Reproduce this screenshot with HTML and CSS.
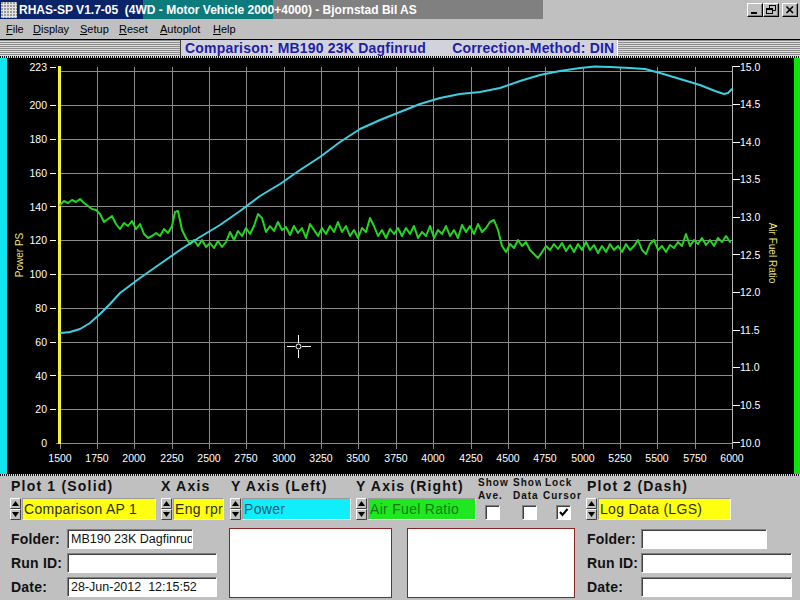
FILE: index.html
```html
<!DOCTYPE html>
<html>
<head>
<meta charset="utf-8">
<title>RHAS-SP</title>
<link rel="stylesheet" href="styles.css">
</head>
<body>
<svg class="defs" width="0" height="0">
  <defs>
    <symbol id="spin" viewBox="0 0 11 22">
      <rect x="0" y="0" width="11" height="22" fill="#c0c0c0"/>
      <path d="M0.5 10.5V0.5H10.5" stroke="#fff" fill="none"/>
      <path d="M0.5 10.5H10.5V0.5" stroke="#404040" fill="none"/>
      <path d="M2 8L5.5 3L9 8Z" fill="#000"/>
      <path d="M0.5 21.5V11.5H10.5" stroke="#fff" fill="none"/>
      <path d="M0.5 21.5H10.5V11.5" stroke="#404040" fill="none"/>
      <path d="M2 14L9 14L5.5 19Z" fill="#000"/>
    </symbol>
  </defs>
</svg>

<div class="titlebar">
  <svg class="app-icon" width="16" height="16" viewBox="0 0 16 16">
    <rect width="16" height="16" fill="#9a9a9a"/>
    <path d="M0 2.5H16M0 5.5H16M0 8.5H16M0 11.5H16M0 14.5H16M2.5 0V16M5.5 0V16M8.5 0V16M11.5 0V16M14.5 0V16" stroke="#e4e4e4"/>
  </svg>
  <span class="title">RHAS-SP V1.7-05  (4WD - Motor Vehicle 2000+4000) - Bjornstad Bil AS</span>
  <div class="win-buttons">
    <div class="wbtn"><svg width="14" height="12" viewBox="0 0 14 12"><rect x="3" y="8" width="6" height="2" fill="#000"/></svg></div>
    <div class="wbtn"><svg width="14" height="12" viewBox="0 0 14 12"><path d="M5.5 4V1.5H11.5V6.5H9" fill="none" stroke="#000"/><path d="M5 1.5H12" stroke="#000"/><rect x="2.5" y="4.5" width="6" height="5" fill="none" stroke="#000"/><path d="M2 5.5H9" stroke="#000"/></svg></div>
    <div class="wbtn close"><svg width="14" height="12" viewBox="0 0 14 12"><path d="M3.5 2.5L10 9M10 2.5L3.5 9" stroke="#000" stroke-width="1.6"/></svg></div>
  </div>
</div>

<div class="menubar">
  <span class="mi"><u>F</u>ile</span>
  <span class="mi"><u>D</u>isplay</span>
  <span class="mi"><u>S</u>etup</span>
  <span class="mi"><u>R</u>eset</span>
  <span class="mi"><u>A</u>utoplot</span>
  <span class="mi"><u>H</u>elp</span>
</div>

<div class="header">
  <div class="stripes left"></div>
  <div class="caption"><span>Comparison: MB190 23K Dagfinrud</span><span class="cm">Correction-Method: DIN</span></div>
  <div class="stripes right"></div>
</div>
<div class="dots"></div>

<div class="chart">
  <svg width="800" height="416" viewBox="0 58 800 416" shape-rendering="crispEdges">
    <rect x="0" y="58" width="800" height="416" fill="#000"/>
    <rect x="0" y="58" width="7" height="416" fill="#10e4ee"/>
    <rect x="794" y="58" width="6" height="416" fill="#10e010"/>

    <g stroke="#8c8c8c" stroke-width="1">
      <path d="M60 71.5H732M60 105.5H732M60 139.5H732M60 173.5H732M60 206.5H732M60 240.5H732M60 274.5H732M60 308.5H732M60 342.5H732M60 375.5H732M60 409.5H732M56 443.5H732"/>
      <path d="M97.5 67V449M134.5 67V449M172.5 67V449M209.5 67V449M246.5 67V449M284.5 67V449M321.5 67V449M358.5 67V449M396.5 67V449M433.5 67V449M471.5 67V449M508.5 67V449M545.5 67V449M583.5 67V449M620.5 67V449M657.5 67V449M695.5 67V449"/>
      <path d="M60.5 443V449"/>
    </g>
    <path d="M732.5 66V449" stroke="#b8b8b8"/>

    <g stroke="#fff">
      <path d="M50 67.5H56M50 105.5H56M50 139.5H56M50 173.5H56M50 206.5H56M50 240.5H56M50 274.5H56M50 308.5H56M50 342.5H56M50 375.5H56M50 409.5H56"/>
      <path d="M733 66.5H740M733 104.5H740M733 142.5H740M733 179.5H740M733 217.5H740M733 254.5H740M733 292.5H740M733 330.5H740M733 367.5H740M733 405.5H740M733 442.5H740"/>
    </g>

    <rect x="58" y="66" width="3" height="378" fill="#f2f230"/>

    <g fill="#fff" font-size="10.5" text-anchor="end">
      <text x="47" y="70.5">223</text>
      <text x="47" y="109.3">200</text>
      <text x="47" y="143.1">180</text>
      <text x="47" y="176.9">160</text>
      <text x="47" y="210.7">140</text>
      <text x="47" y="244.4">120</text>
      <text x="47" y="278.2">100</text>
      <text x="47" y="312">80</text>
      <text x="47" y="345.8">60</text>
      <text x="47" y="379.5">40</text>
      <text x="47" y="413.3">20</text>
      <text x="47" y="447.1">0</text>
    </g>
    <g fill="#fff" font-size="10.5" text-anchor="start">
      <text x="740" y="70.5">15.0</text>
      <text x="740" y="108.1">14.5</text>
      <text x="740" y="145.7">14.0</text>
      <text x="740" y="183.3">13.5</text>
      <text x="740" y="220.9">13.0</text>
      <text x="740" y="258.5">12.5</text>
      <text x="740" y="296.1">12.0</text>
      <text x="740" y="333.7">11.5</text>
      <text x="740" y="371.3">11.0</text>
      <text x="740" y="408.9">10.5</text>
      <text x="740" y="446.5">10.0</text>
    </g>
    <g fill="#fff" font-size="10.5" text-anchor="middle">
      <text x="60" y="462">1500</text>
      <text x="97" y="462">1750</text>
      <text x="134" y="462">2000</text>
      <text x="172" y="462">2250</text>
      <text x="209" y="462">2500</text>
      <text x="246" y="462">2750</text>
      <text x="284" y="462">3000</text>
      <text x="321" y="462">3250</text>
      <text x="358" y="462">3500</text>
      <text x="396" y="462">3750</text>
      <text x="433" y="462">4000</text>
      <text x="471" y="462">4250</text>
      <text x="508" y="462">4500</text>
      <text x="545" y="462">4750</text>
      <text x="583" y="462">5000</text>
      <text x="620" y="462">5250</text>
      <text x="657" y="462">5500</text>
      <text x="695" y="462">5750</text>
      <text x="732" y="462">6000</text>
    </g>

    <text class="axis-title" x="19" y="258.5" transform="rotate(-90 19 255)" text-anchor="middle">Power PS</text>
    <text class="axis-title" x="772" y="256.5" transform="rotate(90 772 253)" text-anchor="middle">Air Fuel Ratio</text>

    <g shape-rendering="auto" fill="none" stroke-linejoin="round" stroke-linecap="round">
      <polyline stroke="#22d622" stroke-width="2" points="60,205 64,201 68,203 72,200 76,202 80,199 84,203 88,206 92,209 96,210 100,214 104,222 108,219 112,216 116,224 120,229 124,223 128,226 132,221 136,229 140,224 144,234 148,238 152,236 156,233 160,236 164,229 168,233 172,226 175,212 178,211 182,230 186,238 190,244 194,240 198,246 202,240 206,247 210,243 214,248 218,241 222,247 226,242 230,232 234,240 238,231 242,236 246,228 250,234 254,226 258,214 262,218 266,232 270,226 274,231 278,222 282,230 286,227 290,235 294,226 298,233 302,228 306,238 310,224 314,230 318,236 322,228 326,234 330,226 334,232 338,222 342,232 346,226 350,236 354,230 358,238 362,228 366,232 370,218 374,226 378,236 382,230 386,238 390,229 394,234 398,228 402,236 406,228 410,234 414,226 418,238 422,232 426,236 430,226 434,238 438,230 442,234 446,226 450,236 454,230 458,238 462,225 466,232 470,226 474,234 478,224 482,232 486,228 490,222 494,220 498,230 502,246 506,252 510,244 514,248 518,240 522,246 526,242 530,250 534,254 538,258 542,252 546,246 550,250 554,244 558,249 562,243 566,251 570,245 574,252 578,244 582,250 586,242 590,250 594,245 598,253 602,246 606,252 610,244 614,250 618,246 622,252 626,244 630,250 634,246 638,240 642,250 646,254 650,244 654,240 658,250 662,246 666,252 670,245 674,248 678,242 682,246 686,234 690,246 694,240 698,244 702,238 706,245 710,240 714,246 718,238 722,242 726,236 730,242"/>
      <polyline stroke="#3ccfe0" stroke-width="2" points="61,333 70,332 80,329 90,323 100,314 110,304 120,293 140,278 160,264 180,250 200,237 220,225 240,211 260,196 280,184 300,170 320,157 340,142 360,129 380,120 400,112 420,104 440,98 460,94 480,92 500,88 520,81 540,75 560,71 580,68 595,66.5 610,67 630,68 645,69 660,73 680,79 700,85 715,91 724,94 728,93 732,89"/>
    </g>

    <g stroke="#fff" fill="none">
      <path d="M287 346.5H295M302 346.5H311M298.5 335V343M298.5 350V358"/>
      <circle cx="298.5" cy="346.5" r="2.5" shape-rendering="auto"/>
    </g>
  </svg>
</div>
<div class="dots"></div>

<div class="panel">
  <div class="controls">
    <div class="col c1">
      <div class="lbl">Plot 1 (Solid)</div>
      <div class="ctl"><svg class="spin"><use href="#spin"/></svg><div class="field yellow">Comparison AP 1</div></div>
    </div>
    <div class="col c2">
      <div class="lbl">X Axis</div>
      <div class="ctl"><svg class="spin"><use href="#spin"/></svg><div class="field yellow">Eng rpr</div></div>
    </div>
    <div class="col c3">
      <div class="lbl">Y Axis (Left)</div>
      <div class="ctl"><svg class="spin"><use href="#spin"/></svg><div class="field cyan">Power</div></div>
    </div>
    <div class="col c4">
      <div class="lbl">Y Axis (Right)</div>
      <div class="ctl"><svg class="spin"><use href="#spin"/></svg><div class="field green">Air Fuel Ratio</div></div>
    </div>
    <div class="col chk c5">
      <div class="cl">Show</div><div class="cl">Ave.</div>
      <div class="box"></div>
    </div>
    <div class="col chk c6">
      <div class="cl">Show</div><div class="cl">Data</div>
      <div class="box"></div>
    </div>
    <div class="col chk c7">
      <div class="cl l1">Lock</div><div class="cl">Cursor</div>
      <div class="box"><svg width="13" height="13" viewBox="0 0 13 13"><path d="M3 6L5.5 9L10.5 3" stroke="#000" stroke-width="2" fill="none"/></svg></div>
    </div>
    <div class="col c8">
      <div class="lbl">Plot 2 (Dash)</div>
      <div class="ctl"><svg class="spin"><use href="#spin"/></svg><div class="field yellow">Log Data (LGS)</div></div>
    </div>
  </div>

  <div class="lower">
    <div class="info left">
      <div class="row"><span class="rl">Folder:</span><div class="inp short">MB190 23K Dagfinrud</div></div>
      <div class="row"><span class="rl">Run ID:</span><div class="inp"></div></div>
      <div class="row"><span class="rl">Date:</span><div class="inp">28-Jun-2012  12:15:52</div></div>
    </div>
    <div class="memo m1"></div>
    <div class="memo m2"></div>
    <div class="info right">
      <div class="row"><span class="rl">Folder:</span><div class="inp short"></div></div>
      <div class="row"><span class="rl">Run ID:</span><div class="inp"></div></div>
      <div class="row"><span class="rl">Date:</span><div class="inp"></div></div>
    </div>
  </div>
</div>
</body>
</html>
```

FILE: styles.css
```css
* { box-sizing: border-box; }

html, body {
  margin: 0;
  padding: 0;
}

body {
  width: 800px;
  height: 600px;
  overflow: hidden;
  background: #c0c0c0;
  font-family: "Liberation Sans", Arial, sans-serif;
  color: #000;
}

.defs { position: absolute; width: 0; height: 0; }

/* Title bar */
.titlebar {
  height: 19px;
  display: flex;
  align-items: center;
  background: linear-gradient(90deg, #0a246a 0 143px, #0b7b7b 143px 273px, #808080 273px 543px, #c0c0c0 543px);
  color: #fff;
  font-weight: bold;
  font-size: 12px;
}

.app-icon { margin: 0 2px 0 1px; flex: none; }

.title { white-space: pre; flex: 1; }

.win-buttons { display: flex; margin-right: 2px; }

.wbtn {
  width: 16px;
  height: 14px;
  background: #c0c0c0;
  border-top: 1px solid #fff;
  border-left: 1px solid #fff;
  border-right: 1px solid #000;
  border-bottom: 1px solid #000;
  box-shadow: inset -1px -1px #808080;
  display: flex;
}

.wbtn.close { margin-left: 3px; }

/* Menu */
.menubar {
  height: 20px;
  display: flex;
  align-items: center;
  padding-left: 6px;
  font-size: 11px;
}

.mi:nth-child(1) { width: 27px; }
.mi:nth-child(2) { width: 47px; }
.mi:nth-child(3) { width: 39px; }
.mi:nth-child(4) { width: 41px; }
.mi:nth-child(5) { width: 53px; }

/* Header caption */
.header {
  height: 17px;
  display: flex;
  border-top: 1px solid #000;
}

.stripes {
  background: repeating-linear-gradient(180deg, #8e8e8e 0 1px, #dadada 1px 2px);
}
.stripes.left { width: 180px; }
.stripes.right { flex: 1; }

.caption {
  width: 438px;
  background: #d2d2dc;
  border-left: 1px solid #404040;
  border-right: 1px solid #fff;
  padding-left: 4px;
  font-size: 14px;
  font-weight: bold;
  letter-spacing: 0.2px;
  line-height: 16px;
  color: #1e1ea6;
  white-space: pre;
}

.caption .cm { margin-left: 26px; }

.dots {
  height: 2px;
  background: repeating-linear-gradient(90deg, #111 0 1px, #d8d8d8 1px 2px);
}

.chart { height: 416px; }
.chart svg { display: block; font-family: "Liberation Sans", Arial, sans-serif; }

.axis-title { fill: #ece27a; font-size: 10px; }

/* Bottom panel */
.panel { height: 124px; }

.controls {
  display: flex;
  height: 45px;
  padding-left: 8px;
}

.col { flex: none; }
.c1 { width: 153px; }
.c2 { width: 68px; }
.c3 { width: 127px; }
.c4 { width: 122px; }
.c5 { width: 35px; }
.c6 { width: 28px; overflow: hidden; }
.c7 { width: 46px; overflow: hidden; }
.c8 { flex: 1; }

.lbl {
  height: 22px;
  line-height: 20px;
  font-size: 14px;
  font-weight: bold;
  letter-spacing: 1.2px;
  white-space: nowrap;
  color: #111;
}
.c1 .lbl { padding-left: 3px; }
.c3 .lbl { padding-left: 2px; }

.ctl { display: flex; height: 22px; }

.spin { width: 11px; height: 22px; flex: none; }
.c1 .spin { margin-left: 2px; }
.c3 .spin { margin-left: 1px; }
.c8 .spin { margin-left: -1px; }

.field {
  height: 22px;
  margin-left: 1px;
  padding-left: 1px;
  font-size: 14px;
  letter-spacing: 0.3px;
  line-height: 20px;
  white-space: nowrap;
  overflow: hidden;
  border: 1px solid;
  border-color: #9a9a9a #f4f4f4 #f4f4f4 #9a9a9a;
}
.c1 .field { width: 134px; }
.c2 .field { width: 51px; }
.c3 .field { width: 109px; }
.c4 .field { width: 108px; }
.c8 .field { width: 133px; }

.yellow { background: #ffff10; color: #2e2e10; }
.cyan { background: #10eefc; color: #1c5a70; }
.green { background: #20e820; color: #137a13; }

.chk { font-size: 10px; font-weight: bold; letter-spacing: 1px; color: #111; }
.cl { height: 13px; line-height: 13px; white-space: nowrap; }
.c6 .cl { padding-left: 0; }
.c7 .cl { padding-left: 2px; }
.c7 .l1 { padding-left: 4px; }

.box {
  width: 15px;
  height: 15px;
  margin-top: 3px;
  background: #fff;
  border: 1px solid;
  border-color: #808080 #fff #fff #808080;
  box-shadow: inset 1px 1px #404040;
  display: flex;
  align-items: center;
  justify-content: center;
}
.c5 .box { margin-left: 7px; }
.c6 .box { margin-left: 9px; }
.c7 .box { margin-left: 15px; }

.lower {
  display: flex;
  margin-top: 7px;
  height: 71px;
}

.info { display: flex; flex-direction: column; gap: 4px; padding-top: 1px; }
.info.left { width: 221px; margin-left: 8px; padding-left: 3px; }
.info.right { margin-left: 12px; }

.row { display: flex; height: 20px; align-items: center; }

.rl {
  font-size: 14px;
  font-weight: bold;
  letter-spacing: 0.2px;
  color: #111;
  white-space: nowrap;
}
.left .rl { width: 56px; }
.right .rl { width: 54px; }

.inp {
  height: 20px;
  width: 150px;
  background: #fff;
  border: 1px solid;
  border-color: #808080 #fff #fff #808080;
  box-shadow: inset 1px 1px #404040;
  font-size: 12.5px;
  line-height: 18px;
  padding-left: 3px;
  white-space: pre;
  overflow: hidden;
  color: #111;
}
.inp.short { width: 126px; }
.right .inp { width: 151px; }
.right .inp.short { width: 126px; }

.memo {
  height: 70px;
  background: #fff;
  border: 1px solid #8a2424;
}
.m1 { width: 163px; }
.m2 { width: 168px; margin-left: 15px; }
```
